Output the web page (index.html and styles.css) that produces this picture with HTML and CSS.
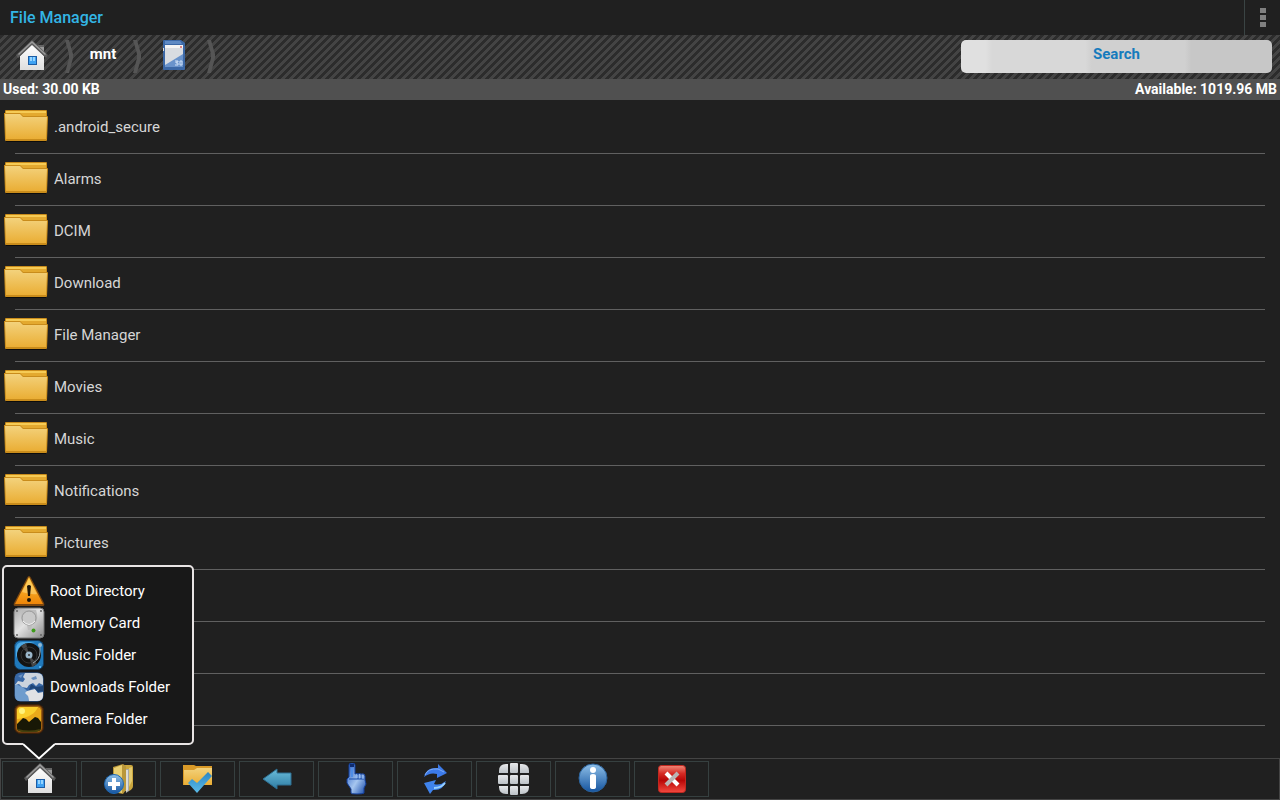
FILE: index.html
```html
<!DOCTYPE html>
<html lang="en">
<head>
    <meta charset="UTF-8">
    <meta name="viewport" content="width=device-width, initial-scale=1.0">
    <title>File Manager</title>
    <link rel="stylesheet" href="styles.css">
</head>
<body>
    <!-- shared icons and gradients -->
    <svg class="defs" aria-hidden="true">
        <defs>
            <linearGradient id="gold" x1="0" y1="0" x2="0" y2="1">
                <stop offset="0" stop-color="#f3d27c"/>
                <stop offset="1" stop-color="#eaae35"/>
            </linearGradient>
            <linearGradient id="white" x1="0" y1="0" x2="0" y2="1">
                <stop offset="0" stop-color="#ffffff"/>
                <stop offset="1" stop-color="#dedede"/>
            </linearGradient>
            <linearGradient id="blue" x1="0" y1="0" x2="0" y2="1">
                <stop offset="0" stop-color="#8fc0e8"/>
                <stop offset="1" stop-color="#15549f"/>
            </linearGradient>
            <linearGradient id="sky" x1="0" y1="0" x2="0" y2="1">
                <stop offset="0" stop-color="#6bbddb"/>
                <stop offset="1" stop-color="#2e7ca3"/>
            </linearGradient>
            <linearGradient id="tick" x1="0" y1="0" x2="0" y2="1">
                <stop offset="0" stop-color="#2a86c4"/>
                <stop offset="1" stop-color="#5cbce8"/>
            </linearGradient>
            <linearGradient id="metal" x1="0" y1="0" x2="1" y2="1">
                <stop offset="0" stop-color="#a8a8a8"/>
                <stop offset=".45" stop-color="#e2e2e2"/>
                <stop offset="1" stop-color="#8a8a8a"/>
            </linearGradient>
            <linearGradient id="amber" x1="0" y1="0" x2="0" y2="1">
                <stop offset="0" stop-color="#ffc73a"/>
                <stop offset="1" stop-color="#ee8508"/>
            </linearGradient>
            <linearGradient id="hand" x1="0" y1="0" x2="1" y2="1">
                <stop offset="0" stop-color="#1f56c0"/>
                <stop offset=".55" stop-color="#a6c6ef"/>
                <stop offset="1" stop-color="#1246a8"/>
            </linearGradient>
            <linearGradient id="red" x1="0" y1="0" x2="0" y2="1">
                <stop offset="0" stop-color="#f08878"/>
                <stop offset=".3" stop-color="#d52a24"/>
                <stop offset=".55" stop-color="#b80606"/>
                <stop offset="1" stop-color="#f44a40"/>
            </linearGradient>
            <linearGradient id="tile" x1="0" y1="0" x2="0" y2="1">
                <stop offset="0" stop-color="#e6e8ea"/>
                <stop offset="1" stop-color="#bcc2c7"/>
            </linearGradient>
            <symbol id="house" viewBox="0 0 32 32">
                <path d="M22 5h6v9h-6z" fill="#9a9a9a"/>
                <path d="M22 5h6v2h-6z" fill="#666"/>
                <path d="M4 16L16 4l12 12v14H4z" fill="url(#white)"/>
                <path d="M16 0L0 15l2 3L16 5l14 13 2-3z" fill="#5a5a5a"/>
                <path d="M16 1L2 14l1 1L16 3l13 12 1-1z" fill="#9c9c9c"/>
                <path d="M12 16h9v9h-9z" fill="#1c5ca4"/>
                <path d="M13 17h7v7h-7z" fill="#3fa2f2"/>
                <path d="M14 17h2v4h-2zM17 17h2v4h-2z" fill="#95d4ff"/>
            </symbol>
            <symbol id="folder" viewBox="0 0 44 34">
                <path d="M2 31h40v1H2z" fill="#0c0c0c"/>
                <path d="M1 1q0-1 1-1h40q1 0 1 1v8H1z" fill="#c98c1b"/>
                <path d="M2 1h40v2H2z" fill="#f6cb55"/>
                <path d="M15 3h27v3H19z" fill="#e3a92f"/>
                <path d="M0 3h16l3 3h24q1 0 1 1l-1 23q0 1-1 1H2q-1 0-1-1z" fill="#c98c1b"/>
                <path d="M1 4h15l3 3h24l-1 22H2z" fill="url(#gold)"/>
            </symbol>
            <symbol id="divider" viewBox="0 0 10 34">
                <path d="M1 1h4l4 14v4L5 34H1l4-15v-4z" fill="#555"/>
            </symbol>
        </defs>
    </svg>

    <header class="title-bar">
        <h1>File Manager</h1>
        <button class="overflow" aria-label="More options"><span></span><span></span><span></span></button>
    </header>

    <nav class="path-bar">
        <a class="crumb crumb-icon" href="#" aria-label="Home"><svg class="icon"><use href="#house"/></svg></a>
        <svg class="divider"><use href="#divider"/></svg>
        <a class="crumb" href="#">mnt</a>
        <svg class="divider"><use href="#divider"/></svg>
        <a class="crumb crumb-icon" href="#" aria-label="SD card">
            <svg class="icon" viewBox="0 0 32 32">
                <path d="M6 0h17l4 3v26q0 1-1 1H6q-1 0-1-1V1q0-1 1-1z" fill="#3c68a6"/>
                <path d="M7 1h15l2 3H7z" fill="#5f8ac4"/>
                <path d="M7 5h18v22H7z" fill="#6a93cb"/>
                <path d="M7 5h18v9L7 25z" fill="#d9dce1"/>
                <path d="M7 5h18v3H7z" fill="#f4f4f4"/>
                <path d="M22 6h2v2h-2z" fill="#d88"/>
                <path d="M5 8h1v3H5z" fill="#ddd"/>
                <path d="M17 21h3v1h-2v1h2v2h-3M22 21v4h2v-4z" stroke="#cfe0f6" fill="none"/>
            </svg>
        </a>
        <svg class="divider"><use href="#divider"/></svg>
        <div class="search-area">
            <button class="search">Search</button>
        </div>
    </nav>

    <div class="storage">
        <span>Used: 30.00 KB</span>
        <span>Available: 1019.96 MB</span>
    </div>

    <main>
        <ul class="file-list">
            <li><svg class="folder"><use href="#folder"/></svg>.android_secure</li>
            <li><svg class="folder"><use href="#folder"/></svg>Alarms</li>
            <li><svg class="folder"><use href="#folder"/></svg>DCIM</li>
            <li><svg class="folder"><use href="#folder"/></svg>Download</li>
            <li><svg class="folder"><use href="#folder"/></svg>File Manager</li>
            <li><svg class="folder"><use href="#folder"/></svg>Movies</li>
            <li><svg class="folder"><use href="#folder"/></svg>Music</li>
            <li><svg class="folder"><use href="#folder"/></svg>Notifications</li>
            <li><svg class="folder"><use href="#folder"/></svg>Pictures</li>
            <li></li>
            <li></li>
            <li></li>
        </ul>
    </main>

    <footer class="toolbar">
        <div class="popup">
            <button>
                <svg class="icon" viewBox="0 0 32 32">
                    <path d="M16 1q1 0 2 2l13 25q1 3-1 3H2q-2 0-1-3L14 3q1-2 2-2z" fill="#7c4710"/>
                    <path d="M16 2L30 29H2z" fill="url(#amber)"/>
                    <path d="M16 4L9 17q10 3 15 2z" fill="#ffe08a" opacity=".5"/>
                    <path d="M14 11q2-2 4 0l-1 10h-2z" fill="#1c1408"/>
                    <circle cx="16" cy="25" r="2" fill="#1c1408"/>
                </svg>
                Root Directory
            </button>
            <button>
                <svg class="icon" viewBox="0 0 32 32">
                    <rect x="1" y="1" width="30" height="30" rx="4" fill="url(#metal)" stroke="#777"/>
                    <path d="M9 3q-3 13 5 15l1 5h3l1-5q8-3 4-15z" fill="#bdbdbd"/>
                    <circle cx="16" cy="11" r="7" fill="#c9c9c9" stroke="#989898"/>
                    <path d="M10 14q6 7 12 0" stroke="#f4f4f4" fill="none"/>
                    <circle cx="20.5" cy="23.5" r="2" fill="#3f9c1c"/>
                    <g fill="#666">
                        <circle cx="4" cy="4" r="1"/><circle cx="28" cy="4" r="1"/>
                        <circle cx="4" cy="28" r="1"/><circle cx="28" cy="28" r="1"/>
                    </g>
                </svg>
                Memory Card
            </button>
            <button>
                <svg class="icon" viewBox="0 0 32 32">
                    <rect x="1.5" y="1.5" width="29" height="29" rx="6" fill="#2079bb" stroke="#123d62"/>
                    <path d="M3 10q0-7 7-7h12q-14 2-19 16z" fill="#4da9e4"/>
                    <circle cx="16" cy="16" r="12" fill="#131313"/>
                    <path d="M16 16L8 7l5-3zM16 16l8 9-5 3z" fill="#474747"/>
                    <circle cx="16" cy="16" r="8" fill="none" stroke="#333"/>
                    <circle cx="16" cy="16" r="3.5" fill="#9ab6c9"/>
                    <circle cx="16" cy="16" r="1" fill="#333"/>
                    <path d="M27 5v8q0 7-7 11" stroke="#97a5ad" fill="none"/>
                    <circle cx="27" cy="6" r="2" fill="#8fb9d4"/>
                    <circle cx="27" cy="28" r="1" fill="#66c4ff"/>
                </svg>
                Music Folder
            </button>
            <button>
                <svg class="icon" viewBox="0 0 32 32">
                    <rect x="1.5" y="1.5" width="29" height="29" rx="6" fill="#3767a5"/>
                    <path d="M2 13q9 3 12 7l2 10H7q-5 0-5-6z" fill="#6f9ccd"/>
                    <path d="M12 2h12q6 0 6 6v6l-4-2-3 3-3-3-4 2-2 3-5-1-3-3-4 1 3-4 5 1 2-3-2-2z" fill="#ccd4dd"/>
                    <path d="M14 20l8-2 3 4 5-1v4q0 5-6 5h-8l-1-5-3-3z" fill="#e1e2e5"/>
                    <path d="M18 13l5 3 7-1v5l-5 1-4-4-5 2z" fill="#1f4678"/>
                    <path d="M18 7l5-2 1 3-4 1zM5 5l5-2-2 4z" fill="#6990bf"/>
                </svg>
                Downloads Folder
            </button>
            <button>
                <svg class="icon" viewBox="0 0 32 32">
                    <rect x="1.5" y="1.5" width="29" height="29" rx="6" fill="#6b3a10" stroke="#3b2009"/>
                    <rect x="3.5" y="3.5" width="25" height="25" rx="4" fill="#eba91a" stroke="#9c600f"/>
                    <path d="M4 8q0-4 4-4h17q-4 10-21 12z" fill="#fbcf2c"/>
                    <circle cx="9" cy="8" r="3" fill="#fff27a"/>
                    <path d="M4 21l6-6 3 1 3 3 6-5 3 1 3 4v6q0 3-3 3H7q-3 0-3-3z" fill="#181806"/>
                    <path d="M5 26q11 3 22 0-1 3-4 3H9q-3 0-4-3z" fill="#45400d"/>
                </svg>
                Camera Folder
            </button>
            <svg class="pointer" viewBox="0 0 32 17">
                <path d="M0 0h32v2h-1L16 16 1 2H0z" fill="#181818"/>
                <path d="M0 1l16 14.5L32 1" fill="none" stroke="#fff" stroke-width="2"/>
            </svg>
        </div>

        <button aria-label="Home"><svg class="icon"><use href="#house"/></svg></button>
        <button aria-label="New folder">
            <svg class="icon" viewBox="0 0 32 32">
                <path d="M20 2h8q2 0 2 2v19q0 3-4 5h-6z" fill="#caa63e"/>
                <path d="M22 6h4v22l-3 2z" fill="#a9a9a4"/>
                <path d="M23 7h2v20l-2 2z" fill="#dcdcd8"/>
                <path d="M26 5l3-1v14l-3 6z" fill="#e3c96d"/>
                <path d="M10 4l10-3 3 2v24l-3 4-10-2z" fill="#b9973a"/>
                <path d="M11 5l8-3v28l-8-2z" fill="#ead073"/>
                <circle cx="11" cy="21" r="9.5" fill="url(#blue)" stroke="#1b67b4"/>
                <path d="M9 15h4v4h4v4h-4v4H9v-4H5v-4h4z" fill="#fff"/>
            </svg>
        </button>
        <button aria-label="Select folder">
            <svg class="icon" viewBox="0 0 32 32">
                <path d="M1 2h11l2 1h16v19H1z" fill="#d99a28"/>
                <path d="M2 7h10l3-2h15v16q0 1-1 1H3q-1 0-1-1z" fill="url(#gold)"/>
                <path d="M6 20l4-4 5 4L26 9l4 4-15 17z" fill="url(#tick)"/>
            </svg>
        </button>
        <button aria-label="Back">
            <svg class="icon" viewBox="0 0 32 32">
                <path d="M2 16L16 6v4h14v12H16v4z" fill="url(#sky)" stroke="#2e6f91"/>
            </svg>
        </button>
        <button aria-label="Select">
            <svg class="icon" viewBox="0 0 32 32">
                <path d="M9 2q0-2 3-2t3 2v9q2-1 3 0 2-1 3 0 4-1 4 2v4l1 4-2 4v5q-1 1-7 1t-6-1v-4l-4-6v-4l2-2z" fill="url(#hand)" stroke="#123e9a"/>
                <path d="M10 1h4v3h-4z" fill="#0f2c70"/>
                <path d="M12 5v9" stroke="#4f8de6" stroke-width="2"/>
                <path d="M18 11v5M21 11v5M9 16h15" stroke="#174ba9" fill="none"/>
                <path d="M17 12v3M20 12v3M23 13v3" stroke="#8db6f2"/>
            </svg>
        </button>
        <button aria-label="Refresh">
            <svg class="icon" viewBox="0 0 32 32">
                <path d="M5 14Q7 4 19 5V1l9 9-10 5v-4Q11 9 5 14z" fill="#3c7ae8"/>
                <path d="M6 12Q9 5 19 6l6 3" stroke="#7eabf6" fill="none"/>
                <path d="M27 18q-3 10-13 9l-3 4-6-11 12-3-2 4q6 2 12-3z" fill="#3f83ec"/>
                <path d="M26 20q-4 5-11 5" stroke="#9ad1fc" stroke-width="2" fill="none"/>
            </svg>
        </button>
        <button aria-label="Grid view">
            <svg class="icon" viewBox="0 0 32 32">
                <g fill="url(#tile)">
                    <path d="M8 1h2v9H1V8q0-7 7-7z"/>
                    <rect x="12" y="0" width="8" height="10" rx="1"/>
                    <path d="M22 1h2q7 0 7 7v2h-9z"/>
                    <rect x="0" y="12" width="10" height="9" rx="1"/>
                    <rect x="12" y="12" width="8" height="9" rx="1"/>
                    <rect x="22" y="12" width="9" height="9" rx="1"/>
                    <path d="M1 23h9v8H8q-7 0-7-7z"/>
                    <rect x="12" y="23" width="8" height="9" rx="1"/>
                    <path d="M22 23h9v1q0 7-7 7h-2z"/>
                </g>
            </svg>
        </button>
        <button aria-label="Information">
            <svg class="icon" viewBox="0 0 32 32">
                <circle cx="16" cy="15" r="14" fill="url(#blue)" stroke="#2b639d"/>
                <circle cx="16" cy="7" r="3" fill="#fff"/>
                <path d="M13 13q0-2 3-2t3 2v11q0 2-3 2t-3-2z" fill="#fff"/>
            </svg>
        </button>
        <button aria-label="Exit">
            <svg class="icon" viewBox="0 0 32 32">
                <rect x="2.5" y="2.5" width="27" height="27" rx="3" fill="url(#red)" stroke="#c1281f"/>
                <path d="M10 10l12 12" stroke="#fff" stroke-width="4"/>
                <path d="M22 10L10 22" stroke="#b9b4b4" stroke-width="4"/>
            </svg>
        </button>
    </footer>
</body>
</html>
```
FILE: styles.css
```css
* {
    margin: 0;
    padding: 0;
    box-sizing: border-box;
}

body {
    height: 100vh;
    display: flex;
    flex-direction: column;
    overflow: hidden;
    font-family: Roboto, sans-serif;
    font-size: 15px;
    color: #d6d6d6;
    background-color: #202020;
}

button {
    border: none;
    background: none;
    color: inherit;
    font: inherit;
    cursor: pointer;
}

.defs {
    position: absolute;
    width: 0;
    height: 0;
}

.icon {
    display: block;
    width: 32px;
    height: 32px;
    flex-shrink: 0;
}

.title-bar {
    display: flex;
    justify-content: space-between;
    height: 35px;
    flex-shrink: 0;
    padding-left: 10px;
}

.title-bar h1 {
    font-size: 16px;
    line-height: 35px;
    font-weight: 500;
    color: #33b5e5;
}

.overflow {
    display: flex;
    flex-direction: column;
    align-items: center;
    justify-content: center;
    gap: 2px;
    width: 36px;
    border-left: 1px solid #3a4444;
}

.overflow span {
    width: 6px;
    height: 5px;
    background-color: #808080;
}

.path-bar {
    display: flex;
    height: 44px;
    flex-shrink: 0;
    background-image: linear-gradient(135deg, #2c2c2c 25%, #444 25%, #444 50%, #2c2c2c 50%, #2c2c2c 75%, #444 75%);
    background-size: 8px 8px;
}

.crumb {
    min-width: 58px;
    line-height: 38px;
    text-align: center;
    font-weight: bold;
    color: #fff;
    text-decoration: none;
}

.crumb-icon {
    width: 64px;
    padding: 5px 16px;
}

.divider {
    width: 10px;
    height: 34px;
    margin-top: 4px;
}

.search-area {
    width: 25%;
    margin-left: auto;
    padding: 5px 8px 6px 1px;
}

.search {
    display: block;
    width: 100%;
    height: 33px;
    padding-bottom: 5px;
    border-radius: 5px;
    font-weight: bold;
    color: #157bbd;
    background: linear-gradient(to right, #e0e0e0 8%, #d8d8d8 10%, #d8d8d8 40%, #d0d0d0 42%, #d0d0d0 72%, #c7c7c7 74%);
}

.storage {
    display: flex;
    justify-content: space-between;
    flex-shrink: 0;
    padding: 0 3px;
    font-size: 14px;
    line-height: 21px;
    font-weight: bold;
    color: #fff;
    background-color: #505050;
}

main {
    flex: 1;
    min-height: 0;
    overflow: hidden;
}

.file-list {
    list-style: none;
    padding-top: 2px;
}

.file-list li {
    display: flex;
    align-items: center;
    gap: 6px;
    height: 52px;
    padding: 0 4px 2px;
    background: linear-gradient(#606060, #606060) bottom / calc(100% - 30px) 1px no-repeat;
}

.folder {
    width: 44px;
    height: 34px;
}

.toolbar {
    position: relative;
    display: flex;
    gap: 4px;
    flex-shrink: 0;
    padding: 2px 1px;
    border: 1px solid #444;
}

.toolbar > button {
    display: flex;
    align-items: center;
    justify-content: center;
    width: 75px;
    height: 36px;
    border: 1px solid #364040;
}

.popup {
    position: absolute;
    left: 1px;
    bottom: 54px;
    width: 192px;
    padding: 8px 8px 8px 9px;
    border: 2px solid #e8e4e4;
    border-radius: 5px;
    color: #fff;
    background-color: #181818;
}

.popup button {
    display: flex;
    align-items: center;
    gap: 5px;
    width: 100%;
    height: 32px;
    text-align: left;
}

.pointer {
    position: absolute;
    left: 19px;
    top: 100%;
    width: 32px;
    height: 17px;
}
```
